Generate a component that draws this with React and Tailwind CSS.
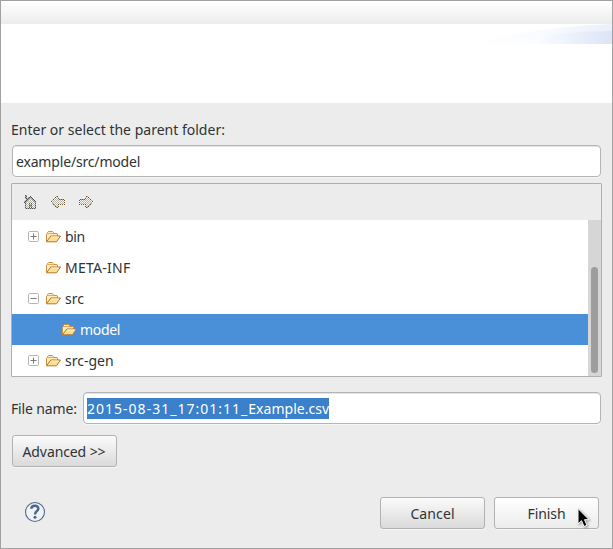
import React from "react";

function Folder() {
  return (
    <svg width="16" height="16" viewBox="0 0 16 16" className="-ml-px shrink-0">
      <path d="M1.5 12.500V5l1-.5V3.500l1-1h4l1 1v1h3.500l.5.5V7" fill="#fdebb9" stroke="#cb9144" />
      <path d="M3 4.500h5" stroke="#e0b060" />
      <path d="M1.5 12.800L5.800 7h9.700l-4 5.800z" fill="#fbdf98" stroke="#bb7524" strokeLinejoin="round" />
      <path d="M6.200 8h7.500" stroke="#fff1c8" />
    </svg>
  );
}

function Toggle({ open }) {
  return (
    <svg width="11" height="11" viewBox="0 0 11 11" className="shrink-0">
      <rect x=".5" y=".5" width="10" height="10" rx="1.2" fill="#fff" stroke="#b4b6b5" />
      <path d={open ? "M2.500 5.500h6" : "M2.500 5.500h6M5.500 2.500v6"} stroke="#777b7b" />
    </svg>
  );
}

function Row({ children, toggle, spacing }) {
  return (
    <div className="flex h-[31px] items-center pl-4">
      <div className="flex w-[18px] pb-px">{toggle && <Toggle open={toggle === "open"} />}</div>
      <Folder />
      <span className={"ml-1 pt-px " + spacing}>{children}</span>
    </div>
  );
}

function Home() {
  return (
    <svg width="16" height="16" viewBox="0 0 16 16" shapeRendering="crispEdges">
      <defs>
        <pattern id="dither" width="2" height="2" patternUnits="userSpaceOnUse">
          <path d="M0 0h2v2H0z" fill="#f7f7f6" />
          <path d="M0 0h1v1H0zM1 1h1v1H1z" fill="#b2b2ae" />
        </pattern>
        <pattern id="ink" width="2" height="2" patternUnits="userSpaceOnUse">
          <path d="M0 0h2v2H0z" fill="#adadaa" />
          <path d="M0 0h1v1H0zM1 1h1v1H1z" fill="#505557" />
        </pattern>
      </defs>
      <path d="M3 15V8l5-5 5 5v7z" fill="url(#dither)" />
      <path d="M3 1h2v4H3zM8 2h1v1h1v1h1v1h1v1h1v1h1v2h-1V8h-1V7h-1V6h-1V5H9V4H8v1H7v1H6v1H5v1H4v1H2V7h1V6h1V5h1V4h1V3h2z" fill="url(#ink)" />
      <path d="M3 9h1v6H3zM13 9h1v6h-1zM4 14h9v1H4z" fill="url(#ink)" />
      <path d="M7 9h1v5H7zM9 9h1v5H9z" fill="url(#ink)" />
      <path d="M8 8h1v1H8zM8 11h1v2H8z" fill="#9cab70" />
    </svg>
  );
}

function Arrow({ flip }) {
  return (
    <svg width="16" height="16" viewBox="0 0 16 16" shapeRendering="crispEdges" className={flip ? "-scale-x-100" : ""}>
      <path d="M1 8l6-6h1v4h7v5H8v3H7z" fill="url(#dither)" />
      <path d="M1 7h1v1H1zM3 5h1v1H3zM5 3h1v1H5zM7 2h1v1H7zM8 4h1v1H8zM9 5h1v1H9zM11 5h1v1h-1zM13 5h1v1h-1zM14 6h1v1h-1zM14 8h1v1h-1zM14 10h1v1h-1zM12 10h1v1h-1zM10 10h1v1h-1zM8 10h1v1H8zM8 12h1v1H8zM7 13h1v1H7zM5 12h1v1H5zM3 10h1v1H3z" fill="#6f5429" />
      <path d="M2 6h1v1H2zM4 4h1v1H4zM6 2h1v1H6zM2 9h1v1H2zM4 11h1v1H4zM6 13h1v1H6zM10 5h1v1h-1zM12 5h1v1h-1z" fill="#aea28e" />
    </svg>
  );
}

const buttonBase = "flex h-8 w-[105px] items-center justify-center rounded-[3px] border border-[#b1b2b1] shadow-[0_1px_0_#f6f6f6] ";
const field = "flex h-8 items-center rounded-[4px] border border-[#b3b4b3] bg-white pl-[3px] shadow-[inset_0_1px_0_#e5e5e5,0_1px_0_#f5f5f5]";

export default function App() {
  return (
    <div className="relative flex h-[549px] w-[613px] flex-col overflow-hidden border border-[#a1a1a1] bg-[#ececec] font-['Noto_Sans','Open_Sans',sans-serif] text-[14px] leading-5 whitespace-nowrap text-[#2e3436]">
      <div className="h-[23px] shrink-0 bg-linear-to-b from-white to-[#ececec]" />
      <div className="flex h-[79px] shrink-0 justify-end bg-white">
        <svg width="140" height="20" viewBox="0 0 140 20">
          <defs>
            <linearGradient id="sweep">
              <stop offset="0" stopColor="#fff" />
              <stop offset=".35" stopColor="#fafcff" />
              <stop offset="1" stopColor="#dce4f7" />
            </linearGradient>
            <linearGradient id="glow">
              <stop offset="0" stopColor="#fff" />
              <stop offset=".5" stopColor="#f9fbff" />
              <stop offset="1" stopColor="#e9effb" />
            </linearGradient>
          </defs>
          <path d="M0 20Q60 3 140 0V20z" fill="url(#glow)" />
          <path d="M25 20Q80 7 140 7V20z" fill="url(#sweep)" />
        </svg>
      </div>

      <div className="flex flex-col pt-[17px] pr-[11px] pl-[11px]">
        <label className="-ml-px h-5 tracking-[0.01px]">Enter or select the parent folder:</label>
        <div className={field + " mt-[5px]"}><span className="pt-0.5 tracking-[-0.17px]">example/src/model</span></div>

        <div className="mt-1.5 -mr-px -ml-px flex h-[194px] flex-col rounded-[1px] border border-[#aeafae]">
          <div className="flex h-9 items-center gap-3 pl-2.5"><Home /><Arrow /><Arrow flip /></div>
          <div className="flex h-[156px] bg-white">
            <div className="grow pt-px">
              <Row toggle="closed" spacing="tracking-[-0.4px]">bin</Row>
              <Row spacing="tracking-[0.25px]">META-INF</Row>
              <Row toggle="open" spacing="">src</Row>
              <div className="flex h-[31px] items-center bg-[#4a90d9] pl-[50px] text-white">
                <Folder /><span className="ml-[3px] pt-px tracking-[-0.3px]">model</span>
              </div>
              <Row toggle="closed" spacing="">src-gen</Row>
            </div>
            <div className="flex w-[13px] justify-center bg-[#d6d6d6] pt-[47px]">
              <div className="h-[106px] w-[7px] rounded-full bg-[#9c9d9d]" />
            </div>
          </div>
        </div>

        <div className="mt-[15px] flex items-center">
          <label className="-ml-px w-[72px] pt-0.5 tracking-[-0.15px]">File name:</label>
          <div className={field + " grow"}>
            <span className="mt-px h-[21px] w-[242px] bg-[#3a80cb] pt-px tracking-[0.03px] text-white"><span className="tracking-[1.01px]">2015-08-31_17:01:11_</span>Example.csv</span>
          </div>
        </div>
        <div className={buttonBase + "mt-[11px] bg-linear-to-b from-[#fbfbfb] to-[#dadada]"}><span className="pt-0.5 pr-px tracking-[-0.1px]">Advanced &gt;&gt;</span></div>
      </div>

      <div className="mt-[30px] flex items-center pr-[13px] pl-[23px]">
        <svg width="22" height="22" viewBox="0 0 22 22" className="mb-[3px]">
          <circle cx="11" cy="11" r="9.5" fill="#f1f2f4" stroke="#506a91" strokeWidth="1.1" />
          <path d="M7.300 7.800C7.400 4 14.600 3.800 14.300 7.700 14.200 10.200 11 10.200 11 13.400" fill="none" stroke="#4b668e" strokeWidth="2.500" />
          <circle cx="11" cy="16.200" r="1.500" fill="#4b668e" />
        </svg>
        <div className={buttonBase + "ml-auto bg-linear-to-b from-[#fbfbfb] to-[#dadada]"}><span className="pt-0.5 tracking-[0.1px]">Cancel</span></div>
        <div className={buttonBase + "ml-[9px] bg-linear-to-b from-white to-[#ececec]"}><span className="pt-0.5 tracking-[-0.1px]">Finish</span></div>
      </div>

      <svg width="16" height="22" viewBox="0 0 16 22" className="absolute top-[506px] left-[575px] drop-shadow-[1px_1px_1px_#0006]">
        <path d="M2 1.500V17l3.500-3.300L8 19.500l3-1.300-2.500-5.500h4.600z" fill="#050505" stroke="#fff" strokeLinejoin="round" />
      </svg>
    </div>
  );
}
